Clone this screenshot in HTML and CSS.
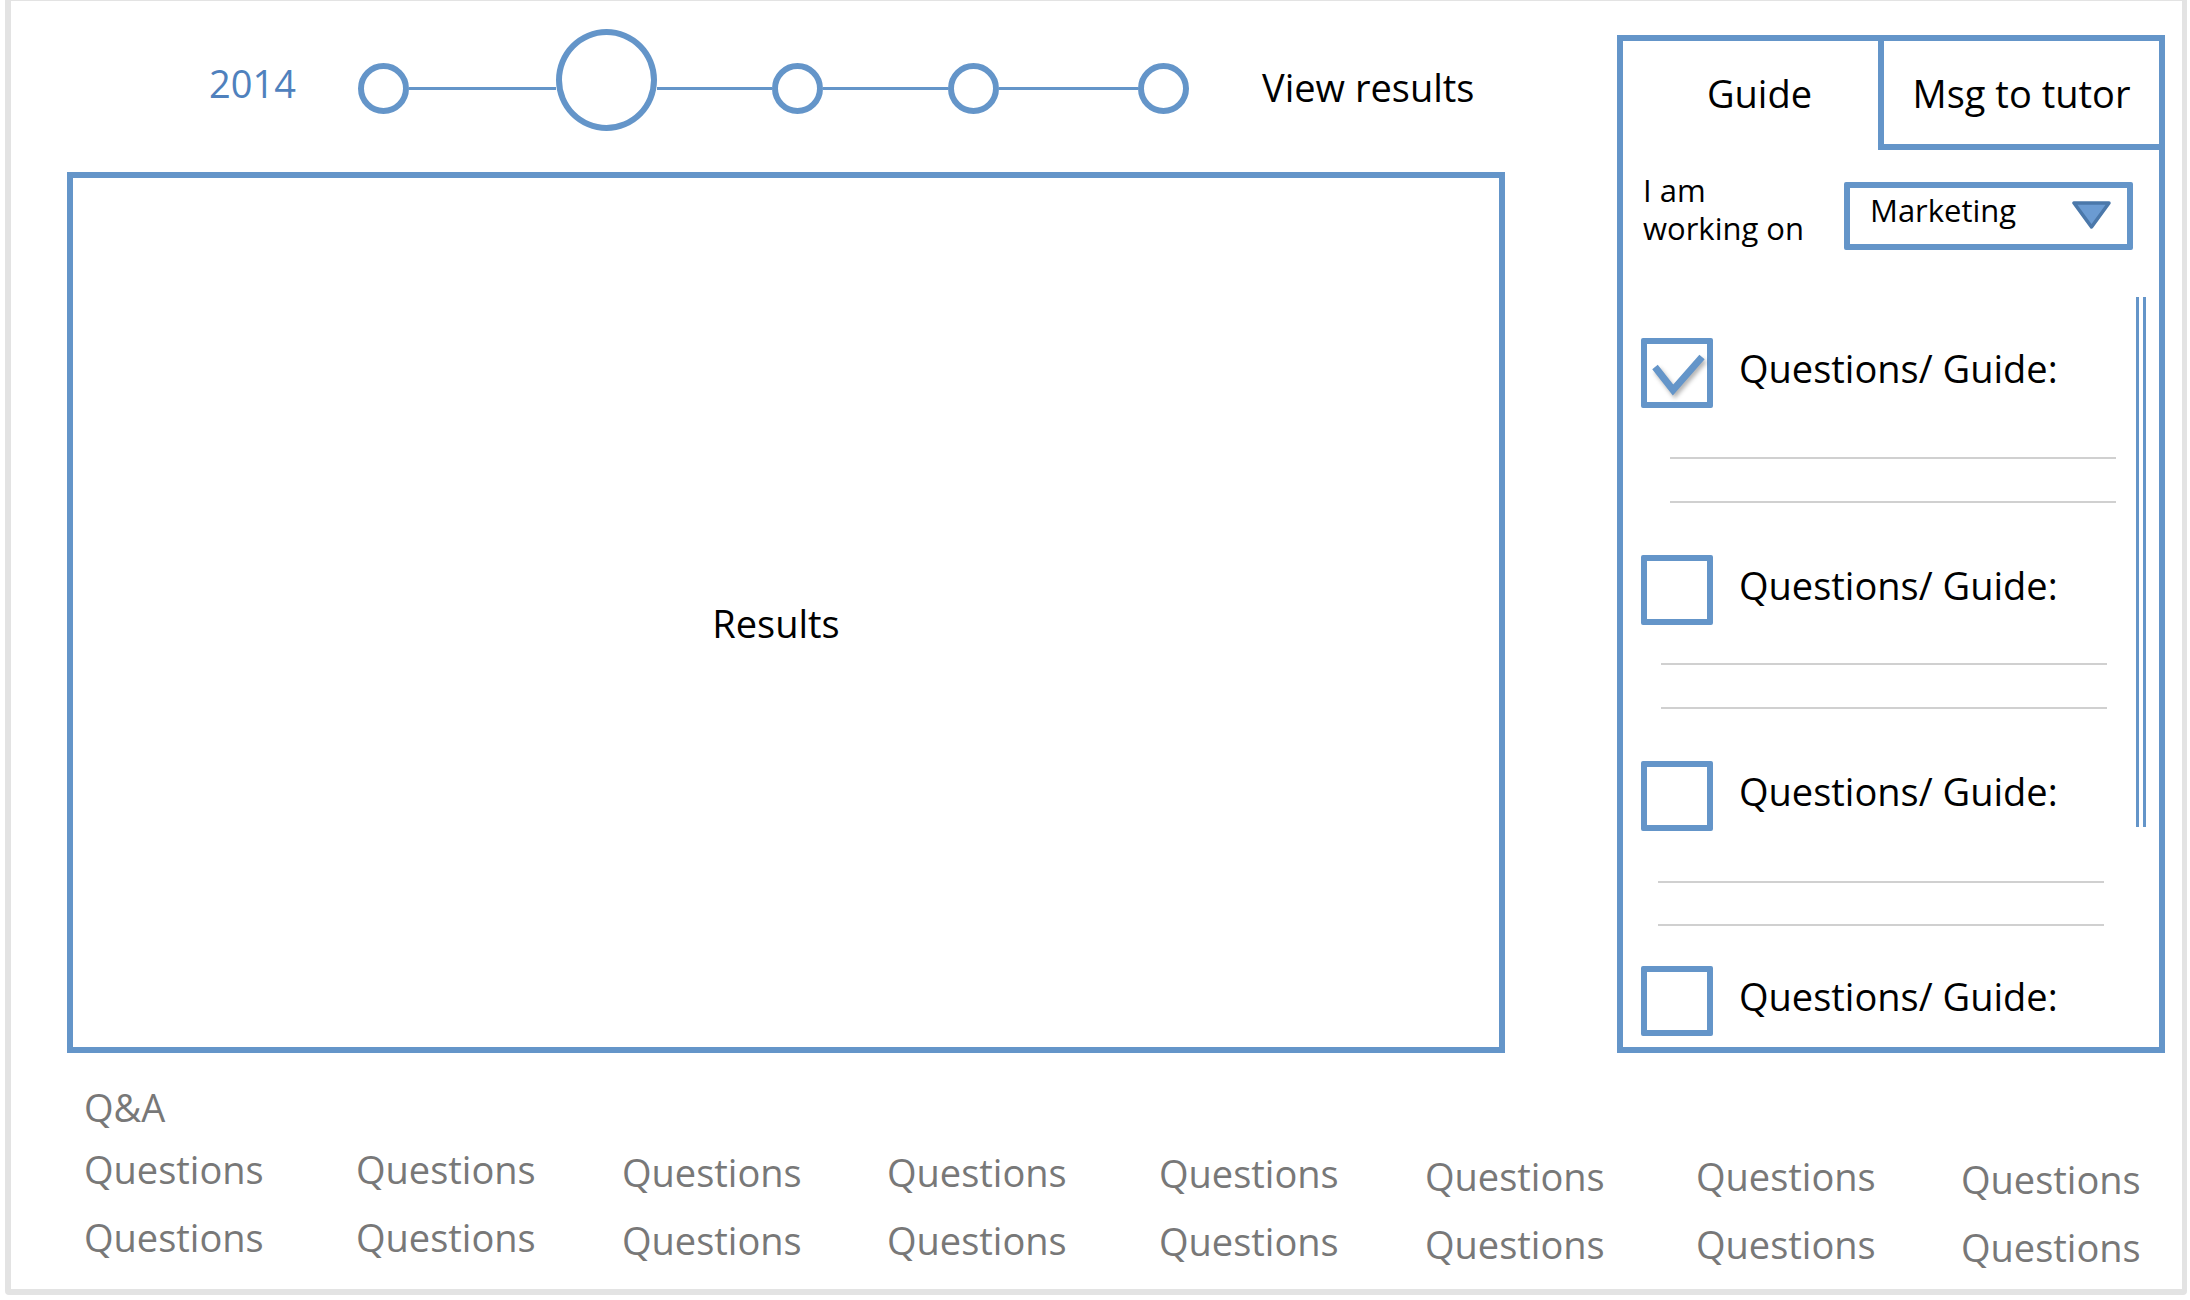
FILE: index.html
```html
<!DOCTYPE html>
<html>
<head>
<meta charset="utf-8">
<link rel="stylesheet" href="styles.css">
</head>
<body>
<div class="frame">
  <div class="top">
    <div class="left">
      <div class="timeline">
        <div class="year">2014</div>
        <div class="dot"></div>
        <div class="link l1"></div>
        <div class="dot big"></div>
        <div class="link l2"></div>
        <div class="dot"></div>
        <div class="link l3"></div>
        <div class="dot"></div>
        <div class="link l4"></div>
        <div class="dot"></div>
        <div class="view">View results</div>
      </div>
      <div class="results"><span>Results</span></div>
    </div>
    <div class="panel">
      <div class="tabs">
        <div class="tab tab-guide">Guide</div>
        <div class="tab tab-msg">Msg to tutor</div>
      </div>
      <div class="working">
        <div class="working-label">I am<br>working on</div>
        <div class="dropdown">
          <span>Marketing</span>
          <svg class="caret" width="39" height="28" viewBox="0 0 39 28"><polygon points="2,2 37,2 19.5,26" fill="#6b9bd2" stroke="#4b78aa" stroke-width="3.5" stroke-linejoin="round"/></svg>
        </div>
      </div>
      <div class="list-wrap">
        <div class="list">
          <div class="item">
            <div class="row">
              <div class="check"><svg class="tick" width="60" height="58" viewBox="0 0 60 58"><polyline points="8,23 26,46 55,13" fill="none" stroke="#6495c9" stroke-width="7"/></svg></div>
              <div class="qtext">Questions/ Guide:</div>
            </div>
            <div class="lines"><div class="hr"></div><div class="hr"></div></div>
          </div>
          <div class="item">
            <div class="row">
              <div class="check"></div>
              <div class="qtext">Questions/ Guide:</div>
            </div>
            <div class="lines"><div class="hr"></div><div class="hr"></div></div>
          </div>
          <div class="item">
            <div class="row">
              <div class="check"></div>
              <div class="qtext">Questions/ Guide:</div>
            </div>
            <div class="lines"><div class="hr"></div><div class="hr"></div></div>
          </div>
          <div class="item">
            <div class="row">
              <div class="check"></div>
              <div class="qtext">Questions/ Guide:</div>
            </div>
          </div>
        </div>
        <div class="scroll"></div>
      </div>
    </div>
  </div>
  <div class="qa">
    <div class="qa-title">Q&amp;A</div>
    <div class="qgrid">
      <div class="q">Questions</div><div class="q">Questions</div><div class="q">Questions</div><div class="q">Questions</div>
      <div class="q">Questions</div><div class="q">Questions</div><div class="q">Questions</div><div class="q">Questions</div>
      <div class="q">Questions</div><div class="q">Questions</div><div class="q">Questions</div><div class="q">Questions</div>
      <div class="q">Questions</div><div class="q">Questions</div><div class="q">Questions</div><div class="q">Questions</div>
    </div>
  </div>
</div>
</body>
</html>
```

FILE: styles.css
```css
html, body {
  margin: 0;
  padding: 0;
  background: #ffffff;
}
body {
  font-family: "Open Sans", "DejaVu Sans", sans-serif;
  color: #000;
}
.frame {
  margin-left: 5px;
  width: 2182px;
  height: 1295px;
  box-sizing: border-box;
  border: 6px solid #e3e3e3;
  border-top-width: 1px;
  border-right-width: 5px;
  border-radius: 0 0 4px 4px;
  overflow: hidden;
}
.top {
  display: flex;
  align-items: flex-start;
}
.left {
  width: 1606px;
  padding-left: 56px;
  box-sizing: border-box;
  flex: none;
}
.timeline {
  display: flex;
  align-items: center;
  height: 100px;
  margin-top: 37px;
  padding-left: 142px;
}
.year {
  width: 149px;
  flex: none;
  font-size: 38px;
  line-height: 1.2;
  color: #4f81bd;
  margin-bottom: 9px;
}
.dot {
  width: 51px;
  height: 51px;
  box-sizing: border-box;
  border: 6px solid #6495c9;
  border-radius: 50%;
  flex: none;
}
.dot.big {
  width: 101px;
  height: 102px;
  margin-bottom: 16px;
}
.link {
  height: 3px;
  background: #6495c9;
  flex: none;
}
.l1 { width: 147px; }
.l2 { width: 115px; }
.l3 { width: 125px; }
.l4 { width: 139px; }
.view {
  margin-left: 73px;
  font-size: 38px;
  line-height: 1.2;
  white-space: nowrap;
}
.results {
  margin-top: 34px;
  width: 1438px;
  height: 881px;
  box-sizing: border-box;
  border: 6px solid #6495c9;
  display: flex;
  align-items: center;
  justify-content: center;
  padding: 20px 20px 0 0;
  font-size: 38px;
}
.panel {
  margin-top: 34px;
  width: 548px;
  height: 1018px;
  box-sizing: border-box;
  border: 6px solid #6495c9;
  overflow: hidden;
  display: flex;
  flex-direction: column;
  flex: none;
}
.tabs {
  display: flex;
  height: 109px;
  flex: none;
}
.tab {
  box-sizing: border-box;
  display: flex;
  align-items: center;
  justify-content: center;
  font-size: 38px;
  line-height: 1.2;
  white-space: nowrap;
}
.tab-guide {
  width: 255px;
  padding-left: 18px;
  padding-bottom: 4px;
}
.tab-msg {
  flex: 1;
  border-left: 6px solid #6495c9;
  border-bottom: 6px solid #6495c9;
  padding-top: 2px;
}
.working {
  display: flex;
  align-items: flex-start;
  padding-left: 20px;
  flex: none;
}
.working-label {
  width: 201px;
  flex: none;
  margin-top: 21px;
  font-size: 31px;
  line-height: 38px;
}
.dropdown {
  margin-top: 32px;
  width: 289px;
  height: 68px;
  box-sizing: border-box;
  border: 6px solid #6495c9;
  border-radius: 2px;
  display: flex;
  align-items: flex-start;
  justify-content: space-between;
  padding-left: 20px;
  font-size: 31px;
  line-height: 44px;
  flex: none;
}
.caret {
  margin-top: 13px;
  margin-right: 16px;
  flex: none;
}
.list-wrap {
  display: flex;
  margin-top: 47px;
}
.list {
  flex: 1;
  padding-left: 18px;
  padding-top: 41px;
}
.scroll {
  width: 10px;
  height: 530px;
  box-sizing: border-box;
  border-left: 3px solid #6495c9;
  border-right: 3px solid #6495c9;
  margin-right: 13px;
  flex: none;
}
.row {
  display: flex;
  align-items: center;
  height: 70px;
}
.check {
  width: 72px;
  height: 70px;
  box-sizing: border-box;
  border: 6px solid #6495c9;
  border-radius: 2px;
  flex: none;
}
.tick {
  display: block;
  overflow: visible;
  filter: drop-shadow(2px 3px 2px rgba(0, 0, 0, 0.3));
}
.qtext {
  margin-left: 26px;
  margin-bottom: 8px;
  font-size: 38px;
  line-height: 1.2;
  white-space: nowrap;
}
.lines {
  margin: 49px 0 52px 29px;
  width: 446px;
}
.item:nth-child(2) .lines {
  margin-top: 38px;
  margin-left: 20px;
}
.item:nth-child(3) .lines {
  margin-top: 50px;
  margin-bottom: 40px;
  margin-left: 17px;
}
.item:nth-child(3) .hr + .hr {
  margin-top: 41px;
}
.hr {
  height: 2px;
  background: #d0d0d0;
}
.hr + .hr {
  margin-top: 42px;
}
.qa {
  padding-left: 73px;
  padding-top: 23px;
  color: #787878;
  font-size: 38px;
}
.qa-title {
  line-height: 62px;
}
.qgrid {
  display: grid;
  grid-template-columns: 272px 266px 265px 272px 266px 271px 265px 268px;
  grid-auto-rows: 68px;
  line-height: 62px;
}
.q {
  white-space: nowrap;
}
.q:nth-child(8n+3), .q:nth-child(8n+4) { padding-top: 3px; }
.q:nth-child(8n+5) { padding-top: 4px; }
.q:nth-child(8n+6), .q:nth-child(8n+7) { padding-top: 7px; }
.q:nth-child(8n) { padding-top: 10px; }
```
